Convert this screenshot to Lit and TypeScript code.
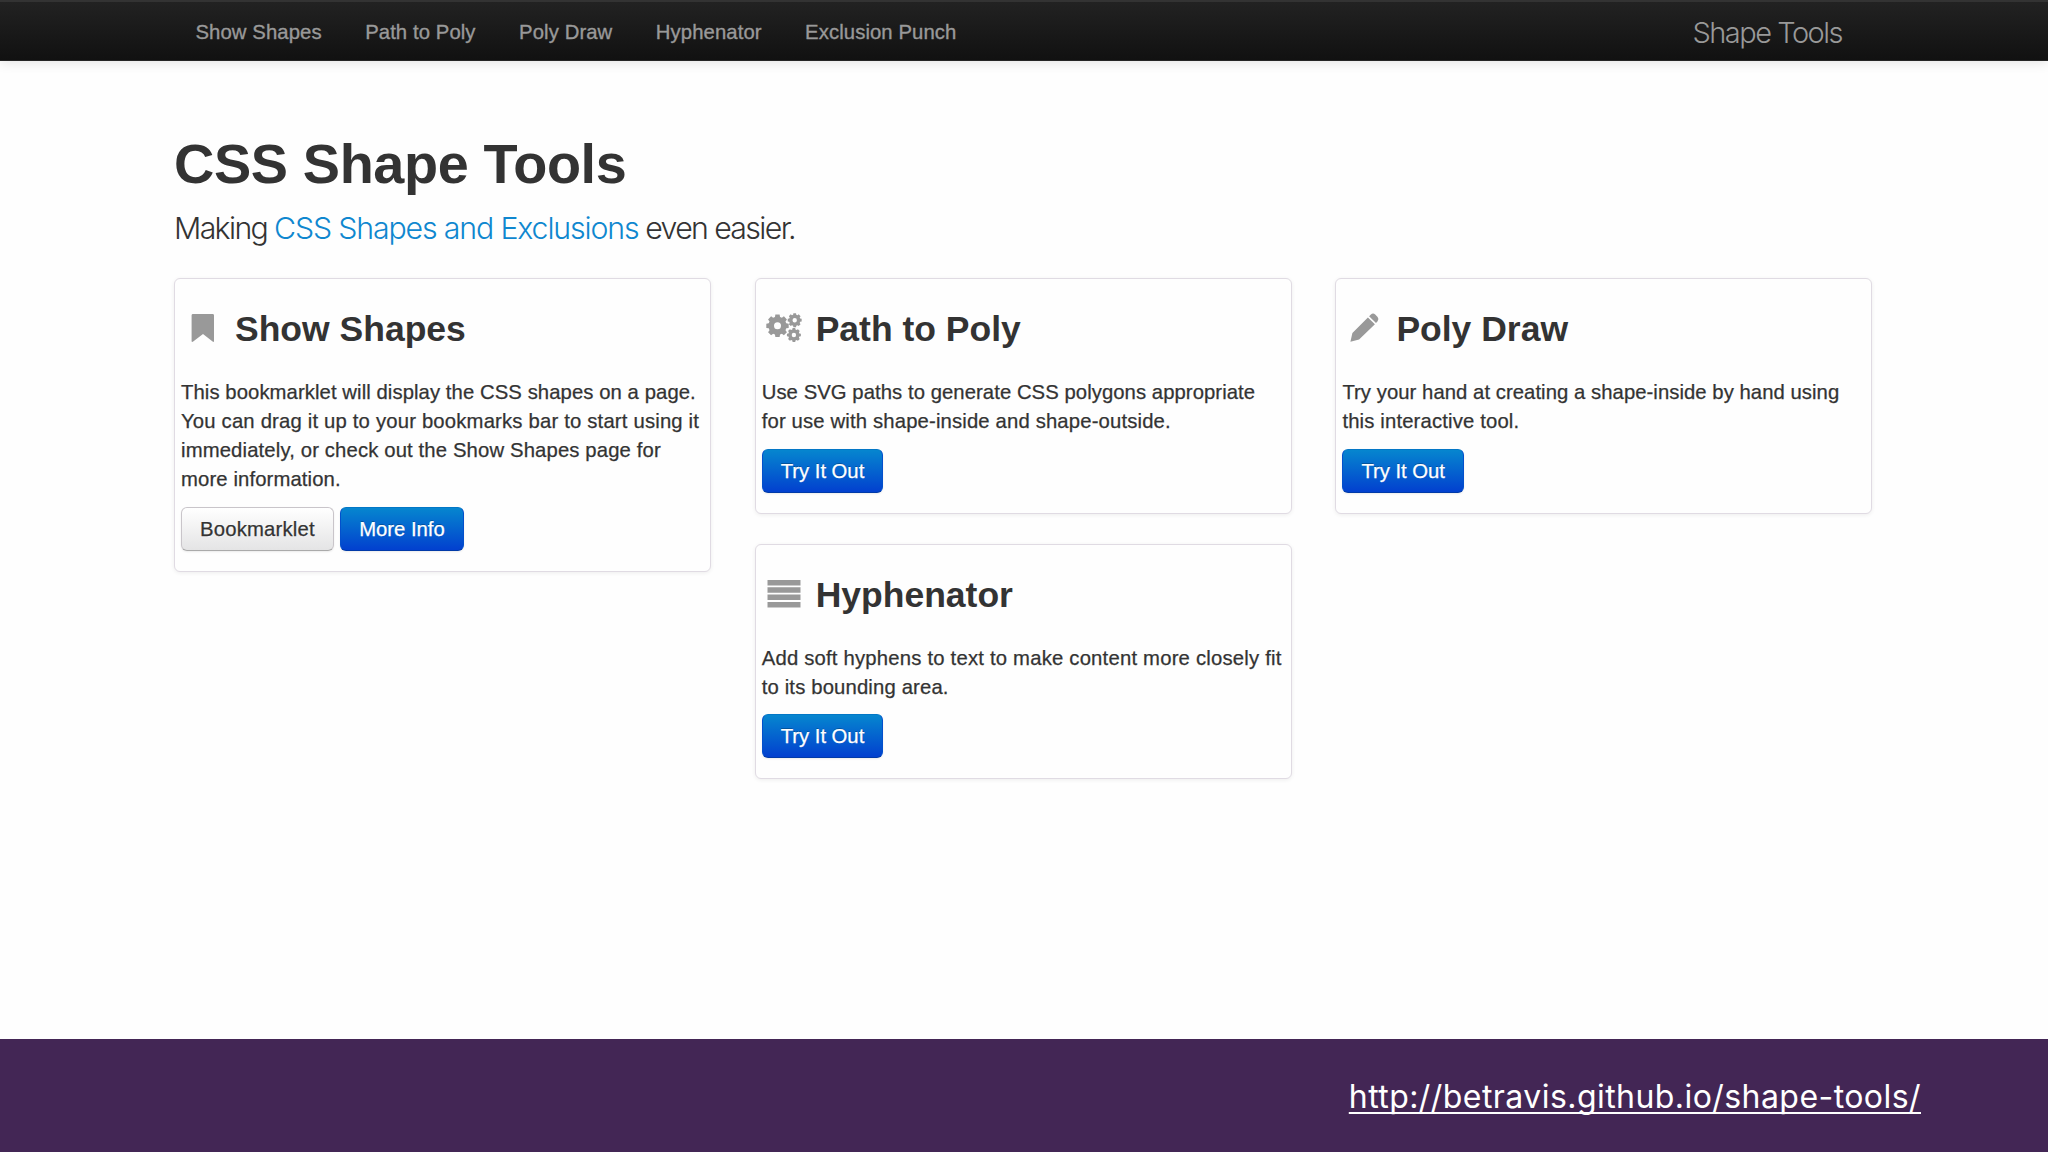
import { LitElement, html, css, svg, nothing } from "lit";
import { customElement, property } from "lit/decorators.js";
import { classMap } from "lit/directives/class-map.js";
import { styleMap } from "lit/directives/style-map.js";

function gear(cx: number, cy: number, r: number, hole: number, teeth: number): string {
  const root = r * 0.8;
  const step = (Math.PI * 2) / teeth;
  const at = (radius: number, angle: number) =>
    `${(cx + radius * Math.cos(angle)).toFixed(2)} ${(cy + radius * Math.sin(angle)).toFixed(2)}`;
  const points: string[] = [];
  for (let i = 0; i < teeth; i++) {
    const a = i * step - Math.PI / 2;
    points.push(
      at(root, a - step * 0.36),
      at(r, a - step * 0.24),
      at(r, a + step * 0.24),
      at(root, a + step * 0.36),
    );
  }
  return (
    `M${points.join("L")}Z` +
    `M${cx - hole} ${cy}a${hole} ${hole} 0 1 0 ${hole * 2} 0a${hole} ${hole} 0 1 0 ${-hole * 2} 0Z`
  );
}

const icons = {
  bookmark: svg`<path d="M12 13.9H31.6Q33 13.9 33 15.3V40.9Q33 42.5 31.6 41.5L22 34L12.2 41.5Q10.6 42.5 10.6 40.9V15.3Q10.6 13.9 12 13.9Z"/>`,
  cogs: svg`<path fill-rule="evenodd" d=${
    gear(15.5, 25.8, 11.4, 3.5, 8) + gear(32.7, 20.2, 7.1, 2.2, 8) + gear(31.9, 35, 7.1, 2.2, 8)
  }/>`,
  pencil: svg`<path d="M8.4 41.7L10.4 32.9L25.9 17.5L32.9 24.2L17.1 39.5Z M27.1 16.3L28.9 14.5Q31 12.6 33.2 14.5L35.6 16.9Q37.4 19.1 35.6 21.3L34 23Z"/>`,
  justify: svg`<path d="M5.5 14H38.5V19.4H5.5Z M5.5 21.3H38.5V26.7H5.5Z M5.5 28.6H38.5V34H5.5Z M5.5 36H38.5V41.4H5.5Z"/>`,
};
type IconName = keyof typeof icons;

/** A line of card copy and its tracking in pixels. */
type Line = [text: string, tracking: number];

@customElement("tool-card")
class ToolCard extends LitElement {
  @property() heading = "";
  @property() icon: IconName = "bookmark";
  @property({ attribute: false }) lines: Line[] = [];
  @property() secondary = "";
  @property() primary = "Try It Out";
  @property({ type: Boolean }) compact = false;

  static styles = css`
    :host {
      display: block;
    }
    .card {
      box-sizing: border-box;
      padding: 21px 6px 20px;
      border: 1.5px solid #e0dbe3;
      border-radius: 6px;
      background: #fefefe;
      box-shadow: 0 1px 4px rgba(0, 0, 0, 0.07);
    }
    .card.compact {
      padding-bottom: 20px;
    }
    .title {
      display: flex;
      gap: 2px;
      margin: 0;
      height: 58px;
      font-size: 35.5px;
      line-height: 58px;
      font-weight: bold;
      white-space: nowrap;
    }
    .icon {
      width: 52px;
      height: 58px;
      flex: none;
      fill: #999;
    }
    .text {
      margin: 19.7px 0 13.2px;
      line-height: 29px;
      white-space: nowrap;
      -webkit-text-stroke: 0.25px currentColor;
    }
    .compact .text {
      margin-bottom: 12.2px;
    }
    .line {
      display: block;
    }
    .actions {
      display: flex;
      gap: 6.5px;
    }
    .button {
      box-sizing: border-box;
      height: 44px;
      padding: 0 18px;
      border: 1px solid #c9c5ca;
      border-bottom-color: #aaa;
      border-radius: 6px;
      background: linear-gradient(#fff, #e4e4e5);
      box-shadow: 0 1px 2px rgba(0, 0, 0, 0.08);
      color: #333;
      line-height: 42px;
      text-decoration: none;
      text-shadow: 0 1px 1px rgba(255, 255, 255, 0.75);
      letter-spacing: 0.18px;
      -webkit-text-stroke: 0.25px currentColor;
    }
    .button.primary {
      border-color: #0377c6 #0350cc #013aa8;
      background: linear-gradient(#0686cf, #0240cf);
      color: #fff;
      letter-spacing: -0.02px;
      text-shadow: 0 -1px 0 rgba(0, 0, 0, 0.25);
    }
  `;

  render() {
    return html`
      <section class=${classMap({ card: true, compact: this.compact })}>
        <h3 class="title">
          <svg class="icon" viewBox="0 0 52 58" aria-hidden="true">${icons[this.icon]}</svg>
          <span>${this.heading}</span>
        </h3>
        <p class="text">
          ${this.lines.map(
            ([text, tracking]) =>
              html`<span class="line" style=${styleMap({ letterSpacing: `${tracking}px` })}>${text}</span>`,
          )}
        </p>
        <div class="actions">
          ${this.secondary ? html`<a class="button">${this.secondary}</a>` : nothing}
          <a class="button primary">${this.primary}</a>
        </div>
      </section>
    `;
  }
}

@customElement("app-root")
class AppRoot extends LitElement {
  static styles = css`
    :host {
      display: flex;
      flex-direction: column;
      width: 2048px;
      height: 1152px;
      overflow: hidden;
      background: #fefefe;
      color: #333;
      font-family: "Liberation Sans", Arial, sans-serif;
      font-size: 20.3px;
      line-height: 29px;
    }
    .navbar {
      box-sizing: border-box;
      display: flex;
      justify-content: space-between;
      align-items: center;
      flex: none;
      height: 61px;
      padding: 3px 206px 0 195.5px;
      border-top: 2px solid #333;
      border-bottom: 1px solid #252525;
      background: linear-gradient(#222, #111);
      box-shadow: 0 1px 12px rgba(0, 0, 0, 0.12);
      color: #999;
      white-space: nowrap;
    }
    .links {
      display: flex;
      gap: 43.5px;
      letter-spacing: 0.09px;
      -webkit-text-stroke: 0.35px currentColor;
    }
    .brand {
      font: 300 29px/40px Inter, sans-serif;
      letter-spacing: -1.5px;
    }
    .content {
      flex: 1;
      padding: 74px 174px 0;
    }
    .headline {
      margin: 0;
      font-size: 55.8px;
      line-height: 58px;
      letter-spacing: -0.36px;
    }
    .lead {
      margin: 14px 0 27.5px;
      font: 300 30.3px/43.5px Inter, sans-serif;
      letter-spacing: -1.65px;
      white-space: nowrap;
    }
    .lead-link {
      color: #0f87cf;
      letter-spacing: -1.15px;
    }
    .columns {
      display: grid;
      grid-template-columns: repeat(3, 537px);
      column-gap: 43.7px;
      align-items: start;
    }
    .column {
      display: grid;
      row-gap: 30px;
    }
    .footer {
      box-sizing: border-box;
      flex: none;
      display: flex;
      justify-content: flex-end;
      height: 113px;
      padding: 37px 127px 0 0;
      background: #432655;
    }
    .url {
      color: #fff;
      font: 400 32px/42px Inter, sans-serif;
      letter-spacing: 0.44px;
      text-decoration: underline;
      text-decoration-thickness: 2px;
      text-decoration-skip-ink: none;
      text-underline-offset: 4px;
    }
  `;

  private links = ["Show Shapes", "Path to Poly", "Poly Draw", "Hyphenator", "Exclusion Punch"];

  render() {
    return html`
      <nav class="navbar">
        <div class="links">${this.links.map((link) => html`<a>${link}</a>`)}</div>
        <a class="brand">Shape Tools</a>
      </nav>
      <main class="content">
        <h1 class="headline">CSS Shape Tools</h1>
        <p class="lead">Making <a class="lead-link">CSS Shapes and Exclusions</a> even easier.</p>
        <div class="columns">
          <div class="column">
            <tool-card
              heading="Show Shapes"
              icon="bookmark"
              secondary="Bookmarklet"
              primary="More Info"
              .lines=${[
                ["This bookmarklet will display the CSS shapes on a page.", 0.075],
                ["You can drag it up to your bookmarks bar to start using it", 0.18],
                ["immediately, or check out the Show Shapes page for", 0.135],
                ["more information.", 0.11],
              ]}
            ></tool-card>
          </div>
          <div class="column">
            <tool-card
              heading="Path to Poly"
              icon="cogs"
              .lines=${[
                ["Use SVG paths to generate CSS polygons appropriate", 0.06],
                ["for use with shape-inside and shape-outside.", 0.15],
              ]}
            ></tool-card>
            <tool-card
              heading="Hyphenator"
              icon="justify"
              compact
              .lines=${[
                ["Add soft hyphens to text to make content more closely fit", 0.2],
                ["to its bounding area.", 0.15],
              ]}
            ></tool-card>
          </div>
          <div class="column">
            <tool-card
              heading="Poly Draw"
              icon="pencil"
              .lines=${[
                ["Try your hand at creating a shape-inside by hand using", 0.05],
                ["this interactive tool.", 0.15],
              ]}
            ></tool-card>
          </div>
        </div>
      </main>
      <footer class="footer">
        <a class="url">http://betravis.github.io/shape-tools/</a>
      </footer>
    `;
  }
}
